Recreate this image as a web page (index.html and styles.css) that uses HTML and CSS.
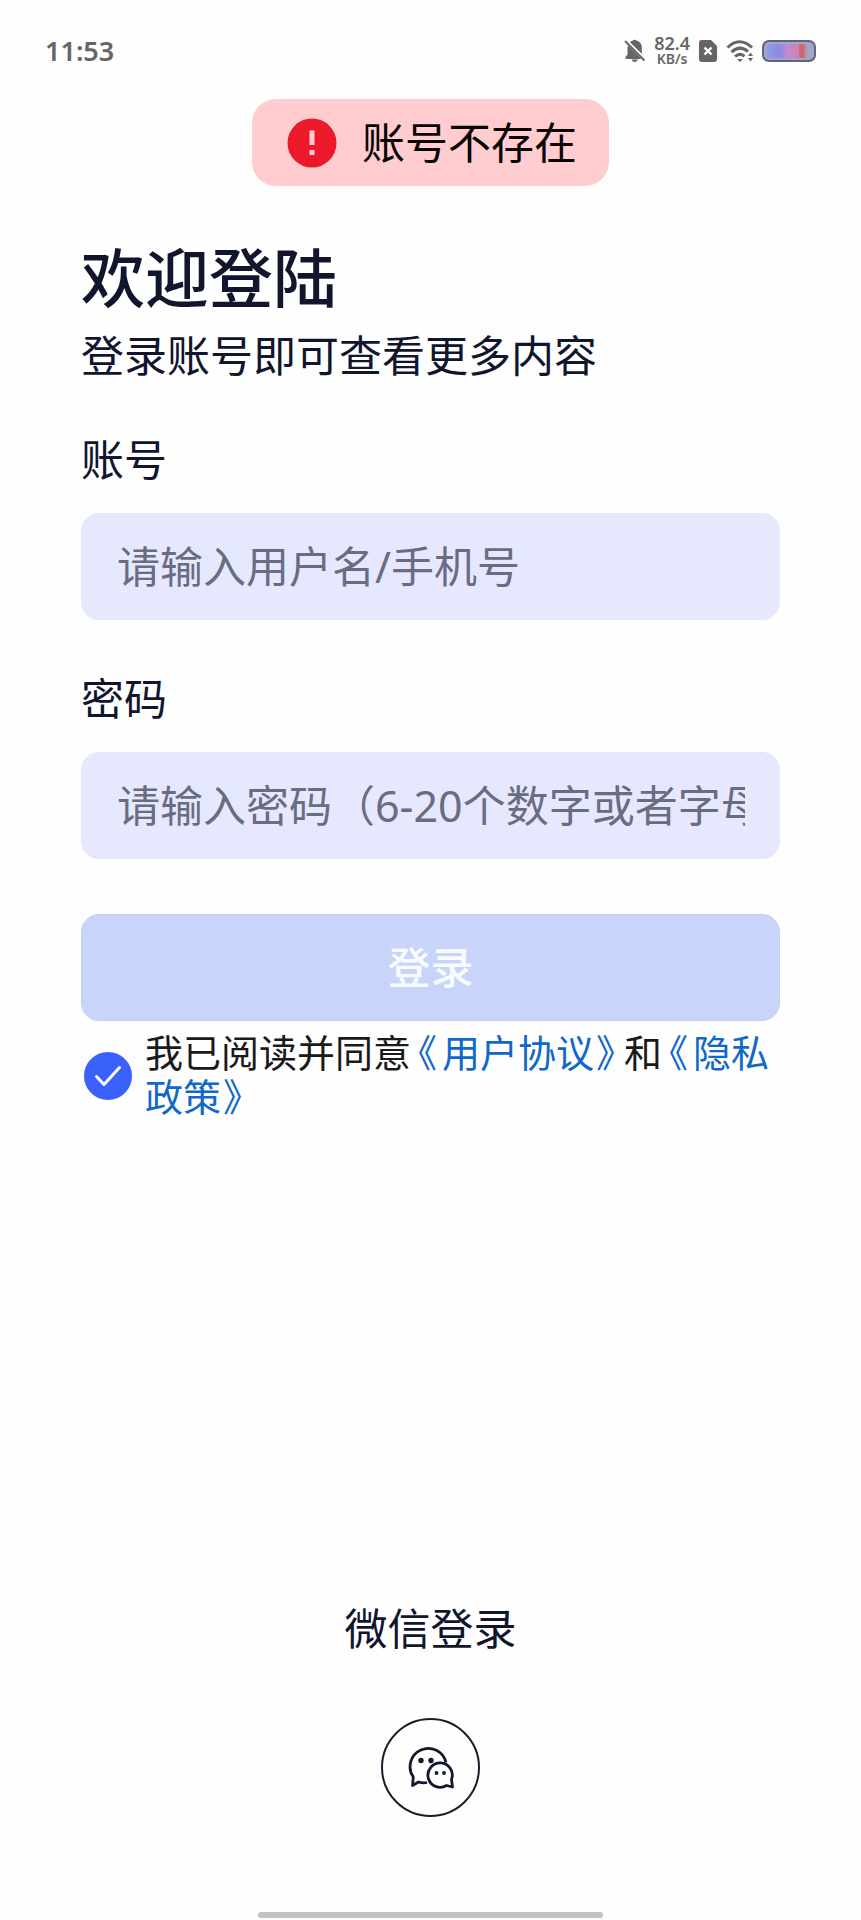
FILE: index.html
```html
<!DOCTYPE html>
<html lang="zh-CN">
<head>
<meta charset="utf-8">
<meta name="viewport" content="width=device-width, initial-scale=1">
<title>欢迎登陆</title>
<link rel="stylesheet" href="styles.css">
</head>
<body>
<div class="status-bar">
  <span class="status-time">11:53</span>
  <div class="status-icons">
    <svg class="icon-bell" width="22" height="24" viewBox="0 0 22 24" fill="#666">
      <path d="M6 3.2 C7 2.3 8 1.8 9 1.6 C9.500 .6 12 .6 12.500 1.600 C16 2.300 17.800 5 17.800 8.500 V14.500 L19 16 Z"/>
      <path d="M4 6.400 L17.500 20 H1.500 V18 L3.500 15.500 V9 Q3.500 7.500 4 6.400 Z"/>
      <path d="M7.500 20.500 H14 Q13 23 10.800 23 Q8.500 23 7.500 20.500 Z"/>
      <path d="M1 2 L20.500 21.500" fill="none" stroke="#666" stroke-width="2"/>
    </svg>
    <span class="net-speed"><span class="net-value">82.4</span><span class="net-unit">KB/s</span></span>
    <svg width="20" height="24" viewBox="0 0 20 24">
      <path d="M3.500 1 H13 L19 7 V20 Q19 23 16 23 H4 Q1 23 1 20 V4 Q1 1 3.500 1 Z" fill="#666"/>
      <path d="M6.500 8.500 L13.500 15.500 M13.500 8.500 L6.500 15.500" stroke="#fff" stroke-width="2.400"/>
    </svg>
    <svg width="28" height="24" viewBox="0 0 28 24" fill="none" stroke="#666" stroke-width="3">
      <path d="M1.500 8.500 Q13.500 -3 26 8.500"/>
      <path d="M5.500 13.200 Q13.500 5.500 22 12.500"/>
      <path d="M9 17.500 Q13.500 13.500 18.500 17.200"/>
      <path d="M11 20 H17 L14 23 Z M22 17 L24.500 13.500 L27 17 Z M22 19 L24.500 22.500 L27 19 Z" fill="#666" stroke="none"/>
    </svg>
    <svg width="54" height="24" viewBox="0 0 54 24">
      <defs>
        <linearGradient id="charge">
          <stop offset="0" stop-color="#8d9fe0"/><stop offset=".28" stop-color="#8a8ae6"/>
          <stop offset=".42" stop-color="#a58ae0"/><stop offset=".5" stop-color="#c98acb"/>
          <stop offset=".78" stop-color="#cf7fae"/><stop offset=".8" stop-color="#d8616e"/>
          <stop offset=".9" stop-color="#cf6670"/><stop offset=".93" stop-color="#b48fb0"/><stop offset="1" stop-color="#a3a3c0"/>
        </linearGradient>
      </defs>
      <rect x="1" y="2" width="52" height="20" rx="6" fill="#a3a5c4" stroke="#5c6488" stroke-width="2"/>
      <rect x="5" y="5" width="41" height="14" rx="2" fill="url(#charge)"/>
    </svg>
  </div>
</div>

<div class="toast" role="alert">
  <svg width="50" height="50" viewBox="0 0 50 50">
    <circle cx="25" cy="25" r="24.500" fill="#ea1a2b"/>
    <path d="M22.500 12.500 H27.500 V27 H22.500 Z M22.500 32 H27.500 V37 H22.500 Z" fill="#ffcdcf"/>
  </svg>
  <span>账号不存在</span>
</div>

<main class="login">
  <h1 class="title">欢迎登陆</h1>
  <p class="subtitle">登录账号即可查看更多内容</p>

  <form class="form">
    <label class="field-label" for="account">账号</label>
    <input class="field" id="account" type="text" placeholder="请输入用户名/手机号">

    <label class="field-label" for="password">密码</label>
    <input class="field" id="password" type="password" placeholder="请输入密码（6-20个数字或者字母）">

    <button class="submit" type="button">登录</button>

    <div class="agreement">
      <span class="check">
        <input class="check-input" id="agree" type="checkbox" checked>
        <svg class="check-mark" viewBox="0 0 48 48" fill="none" stroke="#fff" stroke-width="3" stroke-linecap="round" stroke-linejoin="round">
          <path d="M12.500 24.500 L20 32.500 L35.500 15.500"/>
        </svg>
      </span>
      <label class="agreement-text" for="agree">我已阅读并同意<a href="#terms"><span class="open">《</span>用户协议<span class="close">》</span></a>和<a href="#privacy"><span class="open">《</span>隐私政策<span class="close">》</span></a></label>
    </div>
  </form>
</main>

<section class="wechat">
  <p class="wechat-title">微信登录</p>
  <button class="wechat-button" type="button" aria-label="微信登录">
    <svg width="50" height="50" viewBox="0 0 50 50" fill="none" stroke="#14182f" stroke-width="2.800" stroke-linejoin="round">
      <path d="M21 39.500 Q17 40.500 12.500 39 L6.500 42.500 L7.300 34 A18.200 18.200 0 1 1 40 19.500"/>
      <path d="M45.500 36.500 L46.500 44 L40.500 42.500 A12.200 12.200 0 1 1 45.500 36.500 Z"/>
      <g fill="#14182f" stroke="none">
        <circle cx="15" cy="17.500" r="2.700"/><circle cx="25" cy="17.500" r="2.700"/>
        <circle cx="30.500" cy="30" r="1.900"/><circle cx="38" cy="30" r="1.900"/>
      </g>
    </svg>
  </button>
</section>
<div class="home-bar"></div>
</body>
</html>
```
FILE: styles.css
```css
* {
  box-sizing: border-box;
}

body {
  margin: 0;
  min-height: 100vh;
  display: flex;
  flex-direction: column;
  background: #fefefe;
  color: #11152e;
  font-family: "Noto Sans", "Noto Sans CJK SC", sans-serif;
  font-size: 43px;
  line-height: 60px;
}

h1,
p {
  margin: 0;
}

svg {
  display: block;
  flex: none;
}

.status-bar {
  display: flex;
  justify-content: space-between;
  align-items: center;
  height: 32px;
  margin-top: 35px;
  padding: 0 45px;
  color: #666;
}

.status-time {
  font-size: 27px;
  font-weight: 600;
  line-height: 32px;
}

.status-icons {
  display: flex;
  align-items: center;
  gap: 8px;
}

.net-speed {
  display: flex;
  flex-direction: column;
  align-items: center;
  font-weight: 600;
}

.net-value {
  font-size: 18px;
  line-height: 16px;
}

.net-unit {
  font-size: 14px;
  line-height: 16px;
}

.toast {
  display: flex;
  align-items: center;
  align-self: center;
  gap: 25px;
  margin-top: 32px;
  padding: 14px 32px 13px 35px;
  border-radius: 24px;
  background: #ffcdcf;
  color: #0a0505;
}

.login {
  padding: 56px 81px 0;
}

.title {
  font-size: 64px;
  font-weight: 500;
  line-height: 72px;
}

.subtitle {
  margin-top: 12px;
}

.form {
  display: flex;
  flex-direction: column;
  margin-top: 44px;
}

.field-label {
  align-self: flex-start;
}

.field {
  width: 100%;
  height: 107px;
  margin: 23px 0 49px;
  padding: 0 35px 0 36px;
  border: 0;
  border-radius: 18px;
  background: #e6e9fe;
  color: #11152e;
  font: inherit;
}

.field::placeholder {
  color: #6a6c82;
  opacity: 1;
}

.submit {
  height: 107px;
  margin-top: 6px;
  border: 1px solid #c8d0f0;
  border-radius: 18px;
  background: #c9d4fa;
  color: #f8fbff;
  font: inherit;
  font-weight: 500;
}

.agreement {
  display: flex;
  align-items: center;
  gap: 13px;
  margin-top: 11px;
  padding-left: 3px;
}

.check {
  position: relative;
  flex: none;
  width: 48px;
  height: 48px;
}

.check-input {
  appearance: none;
  display: block;
  width: 48px;
  height: 48px;
  margin: 0;
  border: 2px solid #3a62fb;
  border-radius: 50%;
}

.check-input:checked {
  background: #3a62fb;
}

.check-mark {
  position: absolute;
  inset: 0;
  pointer-events: none;
}

.agreement-text {
  color: #1a1a1a;
  font-family: "Liberation Sans", "Noto Sans CJK SC", sans-serif;
  font-size: 38px;
  line-height: 44px;
}

.agreement-text a {
  color: #1069c9;
  text-decoration: none;
}

.open,
.close {
  font-feature-settings: "halt";
}

.open {
  margin: 0 5px 0 7px;
}

.close {
  margin: 0 9px 0 2px;
}

.wechat {
  display: flex;
  flex-direction: column;
  align-items: center;
  gap: 59px;
  margin-top: auto;
  padding-bottom: 95px;
}

.wechat-button {
  display: grid;
  place-items: center;
  width: 99px;
  height: 99px;
  padding: 0;
  border: 2px solid #1b1d2c;
  border-radius: 50%;
  background: transparent;
}

.home-bar {
  align-self: center;
  width: 40%;
  height: 6px;
  margin-bottom: 2px;
  border-radius: 3px;
  background: #c2c2c2;
}
```
